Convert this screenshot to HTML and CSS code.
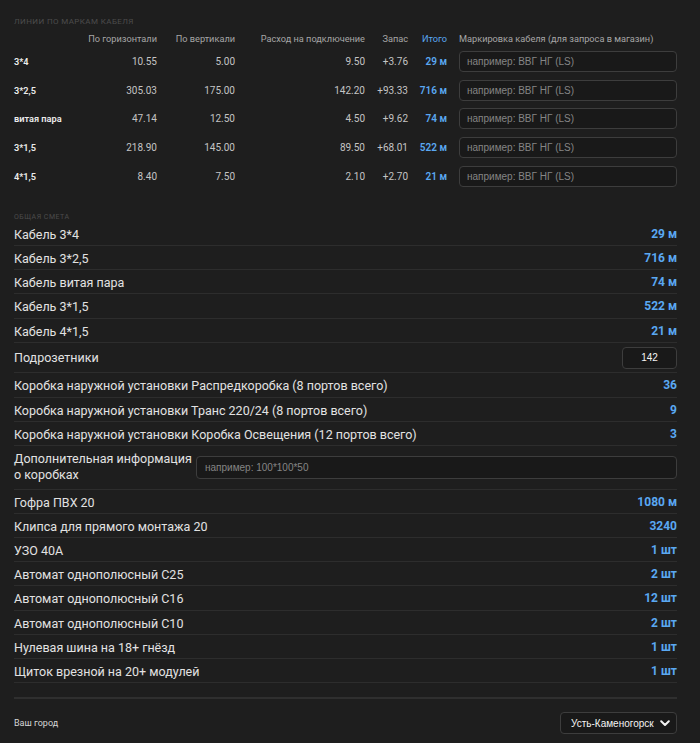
FILE: index.html
```html
<!DOCTYPE html>
<html lang="ru">
<head>
    <meta charset="UTF-8">
    <meta name="viewport" content="width=device-width, initial-scale=1.0">
    <title>Смета электромонтажа</title>
    <link rel="stylesheet" href="styles.css">
</head>
<body>
    <div class="container">
        <div class="section-title">Линии по маркам кабеля</div>

        <div class="cable-table">
            <div class="cable-row cable-head">
                <div></div>
                <div class="num">По горизонтали</div>
                <div class="num">По вертикали</div>
                <div class="num">Расход на подключение</div>
                <div class="num">Запас</div>
                <div class="num total">Итого</div>
                <div class="mark">Маркировка кабеля (для запроса в магазин)</div>
            </div>
            <div class="cable-row">
                <div class="brand">3*4</div>
                <div class="num">10.55</div>
                <div class="num">5.00</div>
                <div class="num">9.50</div>
                <div class="num">+3.76</div>
                <div class="num total">29 м</div>
                <div class="mark"><input type="text" placeholder="например: ВВГ НГ (LS)"></div>
            </div>
            <div class="cable-row">
                <div class="brand">3*2,5</div>
                <div class="num">305.03</div>
                <div class="num">175.00</div>
                <div class="num">142.20</div>
                <div class="num">+93.33</div>
                <div class="num total">716 м</div>
                <div class="mark"><input type="text" placeholder="например: ВВГ НГ (LS)"></div>
            </div>
            <div class="cable-row">
                <div class="brand">витая пара</div>
                <div class="num">47.14</div>
                <div class="num">12.50</div>
                <div class="num">4.50</div>
                <div class="num">+9.62</div>
                <div class="num total">74 м</div>
                <div class="mark"><input type="text" placeholder="например: ВВГ НГ (LS)"></div>
            </div>
            <div class="cable-row">
                <div class="brand">3*1,5</div>
                <div class="num">218.90</div>
                <div class="num">145.00</div>
                <div class="num">89.50</div>
                <div class="num">+68.01</div>
                <div class="num total">522 м</div>
                <div class="mark"><input type="text" placeholder="например: ВВГ НГ (LS)"></div>
            </div>
            <div class="cable-row">
                <div class="brand">4*1,5</div>
                <div class="num">8.40</div>
                <div class="num">7.50</div>
                <div class="num">2.10</div>
                <div class="num">+2.70</div>
                <div class="num total">21 м</div>
                <div class="mark"><input type="text" placeholder="например: ВВГ НГ (LS)"></div>
            </div>
        </div>

        <div class="section-title small">Общая смета</div>

        <div class="estimate">
            <div class="est-row"><span>Кабель 3*4</span><span class="value">29 м</span></div>
            <div class="est-row"><span>Кабель 3*2,5</span><span class="value">716 м</span></div>
            <div class="est-row"><span>Кабель витая пара</span><span class="value">74 м</span></div>
            <div class="est-row"><span>Кабель 3*1,5</span><span class="value">522 м</span></div>
            <div class="est-row"><span>Кабель 4*1,5</span><span class="value">21 м</span></div>
            <div class="est-row with-input">
                <span>Подрозетники</span>
                <input type="text" class="count-input" value="142">
            </div>
            <div class="est-row"><span>Коробка наружной установки Распредкоробка (8 портов всего)</span><span class="value">36</span></div>
            <div class="est-row"><span>Коробка наружной установки Транс 220/24 (8 портов всего)</span><span class="value">9</span></div>
            <div class="est-row"><span>Коробка наружной установки Коробка Освещения (12 портов всего)</span><span class="value">3</span></div>
            <div class="est-row info-row">
                <span class="info-label">Дополнительная информация<br>о коробках</span>
                <input type="text" class="info-input" placeholder="например: 100*100*50">
            </div>
            <div class="est-row"><span>Гофра ПВХ 20</span><span class="value">1080 м</span></div>
            <div class="est-row"><span>Клипса для прямого монтажа 20</span><span class="value">3240</span></div>
            <div class="est-row"><span>УЗО 40А</span><span class="value">1 шт</span></div>
            <div class="est-row"><span>Автомат однополюсный С25</span><span class="value">2 шт</span></div>
            <div class="est-row"><span>Автомат однополюсный С16</span><span class="value">12 шт</span></div>
            <div class="est-row"><span>Автомат однополюсный С10</span><span class="value">2 шт</span></div>
            <div class="est-row"><span>Нулевая шина на 18+ гнёзд</span><span class="value">1 шт</span></div>
            <div class="est-row"><span>Щиток врезной на 20+ модулей</span><span class="value">1 шт</span></div>
        </div>

        <div class="divider"></div>

        <div class="city-row">
            <span class="city-label">Ваш город</span>
            <div class="select-wrap">
                <select class="city-select">
                    <option>Усть-Каменогорск</option>
                    <option>Алматы</option>
                    <option>Астана</option>
                </select>
                <svg class="chevron" width="10" height="7" viewBox="0 0 10 7">
                    <path d="M1.2 1.2 L5 5 L8.8 1.2" fill="none" stroke="#f2f2f2" stroke-width="2" stroke-linecap="round" stroke-linejoin="round"/>
                </svg>
            </div>
        </div>
    </div>
</body>
</html>
```

FILE: styles.css
```css
:root {
    --bg-color: #1e1e1e;
    --field-bg: #191919;
    --field-border: #3d3d3d;
    --line-color: #2d2d2d;
    --text-color: #e2e2e2;
    --muted-color: #a6a6a6;
    --accent-color: #5aa8f2;
}
body {
    font-family: "Segoe UI", Roboto, sans-serif;
    margin: 0;
    padding: 0;
    background-color: var(--bg-color);
    color: var(--text-color);
}
.container {
    padding: 16.5px 23px 0 14px;
}
.section-title {
    font-size: 8px;
    line-height: 10px;
    letter-spacing: 0.4px;
    text-transform: uppercase;
    color: #4c4c4c;
    white-space: nowrap;
}
.section-title.small {
    font-size: 7px;
    letter-spacing: 0.5px;
    margin-top: 21px;
}
.cable-table {
    margin-top: 6px;
}
.cable-row {
    display: grid;
    grid-template-columns: 66px 77px 78px 130px 43px 39px 1fr;
    align-items: center;
    height: 28.75px;
    font-size: 10px;
    color: #c4c4c4;
    white-space: nowrap;
}
.cable-row.cable-head {
    height: 12px;
    line-height: 12px;
    font-size: 9.2px;
    color: var(--muted-color);
    margin-bottom: 2.5px;
}
.cable-row .num {
    text-align: right;
}
.cable-row .total {
    color: var(--accent-color);
    font-weight: 600;
}
.cable-head .total {
    font-weight: normal;
}
.cable-row .brand {
    color: #ececec;
    font-size: 9.2px;
    font-weight: 600;
}
.cable-row .mark {
    padding-left: 12px;
}
input,
select {
    font-family: "Liberation Sans", Arial, sans-serif;
    font-size: 10px;
    color: #f4f4f4;
    background-color: var(--field-bg);
    border: 1px solid var(--field-border);
    border-radius: 4px;
    box-sizing: border-box;
    outline: none;
}
input::placeholder {
    color: #858585;
}
.mark input {
    width: 100%;
    height: 21px;
    padding: 0 7px;
}
.est-row {
    display: flex;
    justify-content: space-between;
    align-items: center;
    font-size: 12.5px;
    line-height: 15.2px;
    padding: 5px 0 3px;
    border-bottom: 1px solid var(--line-color);
}
.est-row .value {
    color: var(--accent-color);
    font-weight: 700;
    font-size: 12px;
}
.est-row.with-input {
    padding: 4px 0 3.6px;
}
.count-input {
    width: 55px;
    height: 22px;
    text-align: center;
    padding: 0;
}
.est-row.info-row {
    padding: 5px 0 5px;
    justify-content: flex-start;
    gap: 10px;
    line-height: 16.3px;
}
.info-label {
    width: 172px;
    flex-shrink: 0;
    white-space: nowrap;
}
.info-input {
    flex: 1;
    height: 23px;
    padding: 0 8px;
}
.divider {
    height: 2px;
    background-color: #2f2f2f;
    margin-top: 13.5px;
}
.city-row {
    display: flex;
    justify-content: space-between;
    align-items: center;
    padding-top: 13px;
}
.city-label {
    font-size: 9px;
    color: #d6d6d6;
}
.select-wrap {
    position: relative;
}
.city-select {
    appearance: none;
    -webkit-appearance: none;
    width: 117px;
    height: 22px;
    padding: 0 22px 0 10px;
}
.chevron {
    position: absolute;
    right: 7px;
    top: 8px;
    pointer-events: none;
}
```
